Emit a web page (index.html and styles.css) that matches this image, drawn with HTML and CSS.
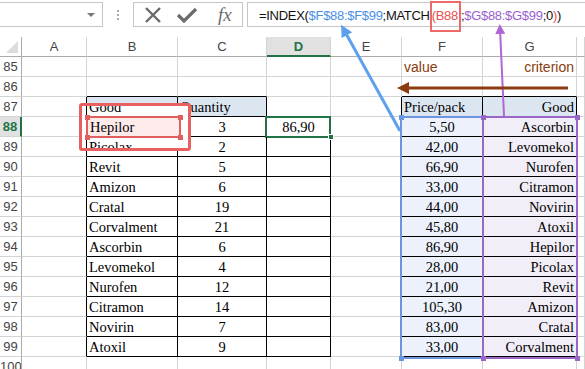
FILE: index.html
```html
<!DOCTYPE html>
<html lang="en">
<head>
    <meta charset="UTF-8">
    <title>INDEX / MATCH</title>
    <link rel="stylesheet" href="styles.css">
</head>
<body>
<div class="screen">
    <div class="formula-bar">
        <div class="name-box"><span class="drop"></span></div>
        <div class="grip"><i></i><i></i><i></i></div>
        <div class="fx-box">
            <svg width="18" height="16" viewBox="0 0 18 16"><path d="M2 1 L16 15 M16 1 L2 15" stroke="#6b6b6b" stroke-width="2.4" fill="none"/></svg>
            <svg width="22" height="16" viewBox="0 0 22 16"><path d="M2 8 L8 14 L20 2" stroke="#6b6b6b" stroke-width="3.2" fill="none"/></svg>
            <span class="fx">fx</span>
        </div>
        <div class="formula">=INDEX(<span class="f-blue">$F$88:$F$99</span>;MATCH<span class="hit">(B88</span>;<span class="f-purple">$G$88:$G$99</span>;0<span class="f-red">)</span>)</div>
    </div>

    <div class="sheet">
        <!-- column headers -->
        <div class="ch corner"></div>
        <div class="ch">A</div>
        <div class="ch">B</div>
        <div class="ch">C</div>
        <div class="ch active">D</div>
        <div class="ch">E</div>
        <div class="ch">F</div>
        <div class="ch">G</div>
        <div class="ch"></div>

        <div class="rh">85</div>
        <div class="c"></div><div class="c"></div><div class="c"></div><div class="c"></div><div class="c"></div>
        <div class="c note">value</div><div class="c note r">criterion</div><div class="c"></div>

        <div class="rh">86</div>
        <div class="c"></div><div class="c tt"></div><div class="c tt"></div><div class="c"></div><div class="c"></div>
        <div class="c tt"></div><div class="c tt"></div><div class="c"></div>

        <!-- B87:B89 are drawn inside the callout -->
        <div class="rh">87</div>
        <div class="c tl"></div><div class="c t head"></div><div class="c t head">Quantity</div><div class="c tt"></div><div class="c tl"></div>
        <div class="c t head">Price/pack</div><div class="c t head r">Good</div><div class="c"></div>

        <div class="rh active">88</div>
        <div class="c tl"></div><div class="c t"></div><div class="c t m">3</div><div class="c t m sel">86,90</div><div class="c tl"></div>
        <div class="c t m val">5,50</div><div class="c t r crit">Ascorbin</div><div class="c"></div>

        <div class="rh">89</div>
        <div class="c tl"></div><div class="c t"></div><div class="c t m">2</div><div class="c t"></div><div class="c tl"></div>
        <div class="c t m val">42,00</div><div class="c t r crit">Levomekol</div><div class="c"></div>

        <div class="rh">90</div>
        <div class="c tl"></div><div class="c t">Revit</div><div class="c t m">5</div><div class="c t"></div><div class="c tl"></div>
        <div class="c t m val">66,90</div><div class="c t r crit">Nurofen</div><div class="c"></div>

        <div class="rh">91</div>
        <div class="c tl"></div><div class="c t">Amizon</div><div class="c t m">6</div><div class="c t"></div><div class="c tl"></div>
        <div class="c t m val">33,00</div><div class="c t r crit">Citramon</div><div class="c"></div>

        <div class="rh">92</div>
        <div class="c tl"></div><div class="c t">Cratal</div><div class="c t m">19</div><div class="c t"></div><div class="c tl"></div>
        <div class="c t m val">44,00</div><div class="c t r crit">Novirin</div><div class="c"></div>

        <div class="rh">93</div>
        <div class="c tl"></div><div class="c t">Corvalment</div><div class="c t m">21</div><div class="c t"></div><div class="c tl"></div>
        <div class="c t m val">45,80</div><div class="c t r crit">Atoxil</div><div class="c"></div>

        <div class="rh">94</div>
        <div class="c tl"></div><div class="c t">Ascorbin</div><div class="c t m">6</div><div class="c t"></div><div class="c tl"></div>
        <div class="c t m val">86,90</div><div class="c t r crit">Hepilor</div><div class="c"></div>

        <div class="rh">95</div>
        <div class="c tl"></div><div class="c t">Levomekol</div><div class="c t m">4</div><div class="c t"></div><div class="c tl"></div>
        <div class="c t m val">28,00</div><div class="c t r crit">Picolax</div><div class="c"></div>

        <div class="rh">96</div>
        <div class="c tl"></div><div class="c t">Nurofen</div><div class="c t m">12</div><div class="c t"></div><div class="c tl"></div>
        <div class="c t m val">21,00</div><div class="c t r crit">Revit</div><div class="c"></div>

        <div class="rh">97</div>
        <div class="c tl"></div><div class="c t">Citramon</div><div class="c t m">14</div><div class="c t"></div><div class="c tl"></div>
        <div class="c t m val">105,30</div><div class="c t r crit">Amizon</div><div class="c"></div>

        <div class="rh">98</div>
        <div class="c tl"></div><div class="c t">Novirin</div><div class="c t m">7</div><div class="c t"></div><div class="c tl"></div>
        <div class="c t m val">83,00</div><div class="c t r crit">Cratal</div><div class="c"></div>

        <div class="rh">99</div>
        <div class="c tl"></div><div class="c t">Atoxil</div><div class="c t m">9</div><div class="c t"></div><div class="c tl"></div>
        <div class="c t m val">33,00</div><div class="c t r crit">Corvalment</div><div class="c"></div>

        <div class="rh">100</div>
        <div class="c"></div><div class="c"></div><div class="c"></div><div class="c"></div><div class="c"></div>
        <div class="c"></div><div class="c"></div><div class="c"></div>
    </div>

    <!-- range highlights of the formula -->
    <div class="range range-blue"><b class="h tl-h"></b><b class="h bl-h"></b></div>
    <div class="range range-purple"><b class="h tl-h"></b><b class="h tr-h"></b><b class="h bl-h"></b><b class="h br-h"></b></div>

    <!-- zoomed callout on B88 -->
    <div class="callout">
        <div class="callout-cells">
            <div class="cc">Good</div>
            <div class="cc pick">Hepilor<b class="h tl-h"></b><b class="h tr-h"></b><b class="h bl-h"></b><b class="h br-h"></b></div>
            <div class="cc">Picolax</div>
        </div>
    </div>

    <svg class="arrows" width="585" height="369" viewBox="0 0 585 369">
        <defs>
            <marker id="head-blue" markerWidth="4" markerHeight="4" refX="2" refY="2" orient="auto" markerUnits="strokeWidth">
                <path d="M0 0 L4 2 L0 4 Z" fill="#5da0ee"/>
            </marker>
            <marker id="head-purple" markerWidth="5" markerHeight="5" refX="2.5" refY="2.5" orient="auto" markerUnits="strokeWidth">
                <path d="M0 0 L5 2.5 L0 5 Z" fill="#b066d6"/>
            </marker>
            <marker id="head-brown" markerWidth="4" markerHeight="4" refX="2" refY="2" orient="auto" markerUnits="strokeWidth">
                <path d="M0 0 L4 2 L0 4 Z" fill="#8a3c0e"/>
            </marker>
        </defs>
        <line x1="400" y1="131" x2="344" y2="30" stroke="#5da0ee" stroke-width="3" marker-end="url(#head-blue)"/>
        <line x1="504" y1="116" x2="500" y2="29" stroke="#b066d6" stroke-width="2" marker-end="url(#head-purple)"/>
        <line x1="568" y1="88" x2="403" y2="88" stroke="#8a3c0e" stroke-width="3" marker-end="url(#head-brown)"/>
    </svg>
</div>
</body>
</html>
```

FILE: styles.css
```css
body {
    margin: 0;
    background-color: #fff;
    font-family: "Liberation Serif", "Times New Roman", serif;
}
.screen {
    position: relative;
    width: 585px;
    height: 369px;
    overflow: hidden;
}

/* formula bar */
.formula-bar {
    display: flex;
    align-items: flex-start;
    height: 37px;
    padding-top: 2px;
    box-sizing: border-box;
    font-family: "Liberation Sans", Arial, sans-serif;
}
.formula-bar > div {
    flex-shrink: 0;
}
.name-box {
    display: flex;
    align-items: center;
    justify-content: flex-end;
    width: 104px;
    height: 25px;
    margin-left: -1px;
    padding-right: 7px;
    border: 1px solid #c6c6c6;
    box-sizing: border-box;
}
.drop {
    width: 0;
    height: 0;
    border-left: 4px solid transparent;
    border-right: 4px solid transparent;
    border-top: 4px solid #777;
}
.grip {
    display: flex;
    flex-direction: column;
    gap: 2px;
    width: 2px;
    margin: 8px 14px 0 14px;
}
.grip i {
    display: block;
    width: 2px;
    height: 2px;
    background-color: #aaa;
}
.fx-box {
    display: flex;
    align-items: center;
    gap: 14px;
    width: 110px;
    height: 25px;
    padding-left: 10px;
    border: 1px solid #c6c6c6;
    box-sizing: border-box;
}
.fx {
    margin-left: 6px;
    font-family: "Liberation Serif", serif;
    font-style: italic;
    font-size: 19px;
    color: #6b6b6b;
}
.formula-bar > .formula {
    flex: 1 1 0;
    min-width: 0;
    height: 25px;
    margin-left: 4px;
    padding-left: 11px;
    border: 1px solid #c6c6c6;
    border-right: none;
    box-sizing: border-box;
    font-size: 13px;
    letter-spacing: -0.3px;
    line-height: 23px;
    white-space: nowrap;
    color: #111;
}
.f-blue { color: #4a8fe4; }
.f-purple { color: #9a5fd1; }
.f-red { color: #e7504f; }
.hit {
    display: inline-block;
    margin: -2px 0 -4px;
    padding: 1px 1px 3px 0;
    line-height: 23px;
    border: 2px solid #ec6a6a;
    color: #e7504f;
}

/* sheet grid */
.sheet {
    display: grid;
    grid-template-columns: 22px 65px 91px 89px 64px 71px 81px 94px 8px;
    grid-auto-rows: 20px;
}
.sheet > div {
    box-sizing: border-box;
    overflow: hidden;
    white-space: nowrap;
}
.ch, .rh {
    font-family: "Liberation Sans", Arial, sans-serif;
    font-size: 13px;
    color: #444;
    background-color: #fff;
}
.ch {
    text-align: center;
    line-height: 19px;
    border-right: 1px solid #d4d4d4;
    border-bottom: 1px solid #ababab;
}
.ch.active {
    background-color: #e1e1e1;
    color: #217346;
    font-weight: bold;
    border-bottom: 2px solid #217346;
}
.corner {
    position: relative;
    border-right: 1px solid #ababab;
}
.corner::after {
    content: "";
    position: absolute;
    right: 3px;
    bottom: 3px;
    border-left: 12px solid transparent;
    border-bottom: 12px solid #dcdcdc;
}
.rh {
    text-align: center;
    line-height: 20px;
    border-right: 1px solid #ababab;
    border-bottom: 1px solid #d4d4d4;
}
.rh.active {
    background-color: #e1e1e1;
    color: #217346;
    font-weight: bold;
    border-right: 2px solid #217346;
}
.c {
    position: relative;
    padding: 1px 2px 0;
    font-size: 14.5px;
    line-height: 19px;
    color: #000;
    border-right: 1px solid #d4d4d4;
    border-bottom: 1px solid #d4d4d4;
}
.c.t {
    border-right-color: #000;
    border-bottom-color: #000;
}
.c.tl { border-right-color: #000; }
.c.tt { border-bottom-color: #000; }
.c.head { background-color: #dce6f1; }
.c.val { background-color: #ecf1fb; }
.c.crit { background-color: #f2eef8; }
.r { text-align: right; }
.m { text-align: center; }
.note {
    font-family: "Liberation Sans", Arial, sans-serif;
    font-size: 14px;
    color: #8a3c0e;
}
.c.sel { overflow: visible; }
.sel::after {
    content: "";
    position: absolute;
    top: -1px;
    left: -2px;
    right: -1px;
    bottom: -2px;
    border: 2px solid #217346;
}
.sel::before {
    content: "";
    position: absolute;
    right: -4px;
    bottom: -4px;
    width: 4px;
    height: 4px;
    background-color: #217346;
    border: 1px solid #fff;
    z-index: 1;
}

/* formula reference ranges */
.range {
    position: absolute;
    top: 116px;
    height: 243px;
    box-sizing: border-box;
    border: 2px solid;
}
.range-blue {
    left: 400px;
    width: 84px;
    border-color: #6d95e0;
    color: #6d95e0;
}
.range-purple {
    left: 482px;
    width: 96px;
    border-color: #9a67c9;
    color: #9a67c9;
}
.h {
    position: absolute;
    width: 5px;
    height: 5px;
    background-color: currentColor;
}
.tl-h { top: -3.5px; left: -3.5px; }
.tr-h { top: -3.5px; right: -3.5px; }
.bl-h { bottom: -3.5px; left: -3.5px; }
.br-h { bottom: -3.5px; right: -3.5px; }

/* callout around B88 */
.callout {
    position: absolute;
    left: 79px;
    top: 103px;
    width: 112px;
    height: 48px;
    box-sizing: border-box;
    border: 3px solid #e8605f;
    border-radius: 3px;
    background-color: #fff;
    overflow: hidden;
}
.callout-cells {
    position: absolute;
    left: 4px;
    top: -9px;
    width: 95px;
}
.cc {
    position: relative;
    height: 20px;
    padding: 1px 2px 0;
    box-sizing: border-box;
    font-size: 14.5px;
    line-height: 19px;
    border-left: 1px solid #000;
}
.cc.pick {
    height: 22px;
    margin: -1px 0;
    padding: 0 2px;
    line-height: 18px;
    border: 2px solid #e06060;
    background-color: #fdeaea;
    color: #000;
    z-index: 1;
}
.cc.pick .h {
    color: #e06060;
}

.arrows {
    position: absolute;
    left: 0;
    top: 0;
    pointer-events: none;
}
```
